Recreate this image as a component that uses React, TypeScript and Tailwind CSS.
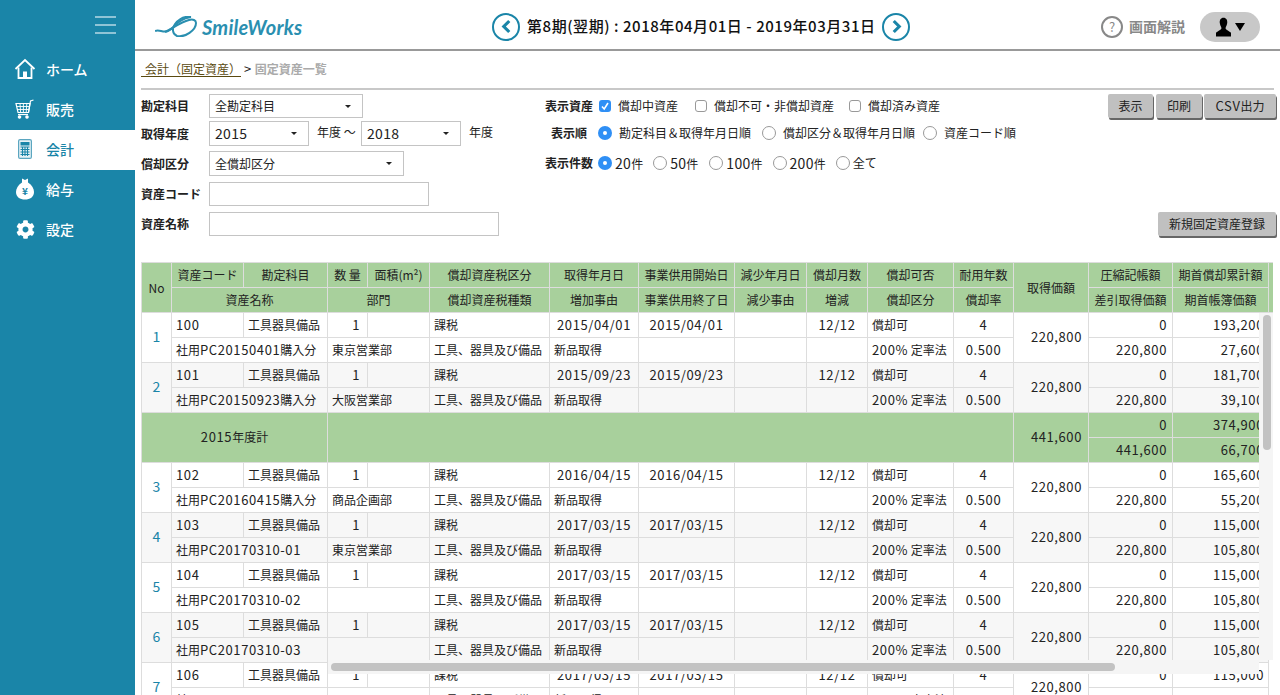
import { FaCog } from 'react-icons/fa';

const FONT = "font-['Noto_Sans_CJK_JP','Noto_Sans',sans-serif]";

type Asset = {
  no: number;
  code: string;
  name: string;
  dept: string;
  acquired: string;
  start: string;
  comp: string;
  cum: string;
  net: string;
  book: string;
};

const assets: Asset[] = [
  { no: 1, code: '100', name: '社用PC20150401購入分', dept: '東京営業部', acquired: '2015/04/01', start: '2015/04/01', comp: '0', cum: '193,200', net: '220,800', book: '27,600' },
  { no: 2, code: '101', name: '社用PC20150923購入分', dept: '大阪営業部', acquired: '2015/09/23', start: '2015/09/23', comp: '0', cum: '181,700', net: '220,800', book: '39,100' },
  { no: 3, code: '102', name: '社用PC20160415購入分', dept: '商品企画部', acquired: '2016/04/15', start: '2016/04/15', comp: '0', cum: '165,600', net: '220,800', book: '55,200' },
  { no: 4, code: '103', name: '社用PC20170310-01', dept: '東京営業部', acquired: '2017/03/15', start: '2017/03/15', comp: '0', cum: '115,000', net: '220,800', book: '105,800' },
  { no: 5, code: '104', name: '社用PC20170310-02', dept: '', acquired: '2017/03/15', start: '2017/03/15', comp: '0', cum: '115,000', net: '220,800', book: '105,800' },
  { no: 6, code: '105', name: '社用PC20170310-03', dept: '', acquired: '2017/03/15', start: '2017/03/15', comp: '0', cum: '115,000', net: '220,800', book: '105,800' },
  { no: 7, code: '106', name: '社用PC20170310-04', dept: '', acquired: '2017/03/15', start: '2017/03/15', comp: '0', cum: '115,000', net: '220,800', book: '105,800' },
];

const colWidths = [30, 72, 84, 40, 62, 120, 89, 96, 72, 61, 86, 60, 75, 84, 96, 5];

// latin runs are a little wider than the CJK font gives at 12px
function T({ text }: { text: string }) {
  return (
    <>
      {text.split(/([\x21-\x7e]+)/).map((part, i) =>
        /[\x21-\x7e]/.test(part) ? (
          <span key={i} className="text-[13px] tracking-[0.6px]">
            {part}
          </span>
        ) : (
          part
        ),
      )}
    </>
  );
}

const th = 'border border-[#ddd] bg-[#a8d09c] h-[25px] p-0 font-normal text-center text-[12px] text-[#222]';
const td = 'border border-[#ddd] h-[25px] p-0 px-[4px] text-[12px] text-[#222] whitespace-nowrap overflow-hidden';
const num = td + ' text-right pr-[5px]';
const price = td + ' text-right pr-[6px] pb-[2px]';

function AssetRows({ a }: { a: Asset }) {
  const bg = a.no % 2 === 0 ? 'bg-[#f7f7f7]' : 'bg-white';
  return (
    <>
      <tr className={bg}>
        <td rowSpan={2} className="border border-[#ddd] p-0 pb-[2px] text-center text-[14px] text-[#1a85a8]">
          {a.no}
        </td>
        <td className={td}><T text={a.code} /></td>
        <td className={td}>工具器具備品</td>
        <td className={td + ' text-right pr-[7px]'}><T text="1" /></td>
        <td className={td}></td>
        <td className={td}>課税</td>
        <td className={td + ' text-center'}><T text={a.acquired} /></td>
        <td className={td + ' text-center'}><T text={a.start} /></td>
        <td className={td}></td>
        <td className={td + ' text-center'}><T text="12/12" /></td>
        <td className={td}>償却可</td>
        <td className={td + ' text-center'}><T text="4" /></td>
        <td rowSpan={2} className={price}><T text="220,800" /></td>
        <td className={num}><T text={a.comp} /></td>
        <td className={td + ' text-right'}><T text={a.cum} /></td>
      </tr>
      <tr className={bg}>
        <td colSpan={2} className={td}><T text={a.name} /></td>
        <td colSpan={2} className={td}>{a.dept}</td>
        <td className={td}>工具、器具及び備品</td>
        <td className={td}>新品取得</td>
        <td className={td}></td>
        <td className={td}></td>
        <td className={td}></td>
        <td className={td}><T text="200%" /> 定率法</td>
        <td className={td + ' text-center'}><T text="0.500" /></td>
        <td className={num}><T text={a.net} /></td>
        <td className={td + ' text-right'}><T text={a.book} /></td>
      </tr>
    </>
  );
}

function TotalRows() {
  const g = td + ' bg-[#a8d09c]';
  const n = num + ' bg-[#a8d09c]';
  return (
    <>
      <tr>
        <td colSpan={3} rowSpan={2} className={g + ' text-center pb-[2px]'}><T text="2015" />年度計</td>
        <td colSpan={9} rowSpan={2} className={g}></td>
        <td rowSpan={2} className={price + ' bg-[#a8d09c]'}><T text="441,600" /></td>
        <td className={n}><T text="0" /></td>
        <td className={g + ' text-right'}><T text="374,900" /></td>
      </tr>
      <tr>
        <td className={n}><T text="441,600" /></td>
        <td className={g + ' text-right'}><T text="66,700" /></td>
      </tr>
    </>
  );
}

function AssetTable() {
  return (
    <div className="relative ml-[6px] mt-[26px] w-[1132px] flex-1 min-h-0 overflow-hidden">
      <table className="table-fixed border-collapse w-[1132px]">
        <colgroup>
          {colWidths.map((w, i) => (
            <col key={i} style={{ width: w }} />
          ))}
        </colgroup>
        <thead>
          <tr>
            <th rowSpan={2} className={th}>No</th>
            <th className={th}>資産コード</th>
            <th className={th}>勘定科目</th>
            <th className={th}>数 量</th>
            <th className={th}>面積(m²)</th>
            <th className={th}>償却資産税区分</th>
            <th className={th}>取得年月日</th>
            <th className={th}>事業供用開始日</th>
            <th className={th}>減少年月日</th>
            <th className={th}>償却月数</th>
            <th className={th}>償却可否</th>
            <th className={th}>耐用年数</th>
            <th rowSpan={2} className={th}>取得価額</th>
            <th className={th}>圧縮記帳額</th>
            <th className={th}>期首償却累計額</th>
            <th rowSpan={2} className={th}></th>
          </tr>
          <tr>
            <th colSpan={2} className={th}>資産名称</th>
            <th colSpan={2} className={th}>部門</th>
            <th className={th}>償却資産税種類</th>
            <th className={th}>増加事由</th>
            <th className={th}>事業供用終了日</th>
            <th className={th}>減少事由</th>
            <th className={th}>増減</th>
            <th className={th}>償却区分</th>
            <th className={th}>償却率</th>
            <th className={th}>差引取得価額</th>
            <th className={th}>期首帳簿価額</th>
          </tr>
        </thead>
        <tbody>
          <AssetRows a={assets[0]} />
          <AssetRows a={assets[1]} />
          <TotalRows />
          {assets.slice(2).map((a) => (
            <AssetRows key={a.no} a={a} />
          ))}
        </tbody>
      </table>
      {/* overlay scrollbars */}
      <div className="absolute left-[1118px] top-[51px] w-[14px] h-[347px] bg-[#f5f5f5]">
        <div className="ml-[4px] mt-[2px] w-[8px] h-[135px] rounded bg-[#c2c2c2]" />
      </div>
      <div className="absolute left-[187px] top-[398px] w-[931px] h-[14px] bg-[#f5f5f5] pt-[3px]">
        <div className="ml-[3px] w-[784px] h-[8px] rounded bg-[#c2c2c2]" />
      </div>
    </div>
  );
}

function Check({ on }: { on?: boolean }) {
  return (
    <span
      className={
        'inline-flex w-[12px] h-[12px] rounded-[3px] items-center justify-center ' +
        (on ? 'bg-[#2f8ff5]' : 'bg-white border border-[#999]')
      }
    >
      {on && (
        <svg viewBox="0 0 12 12" className="w-[12px] h-[12px]">
          <path d="M3 6.5 L5.2 9 L9 3" fill="none" stroke="#fff" strokeWidth="1.6" />
        </svg>
      )}
    </span>
  );
}

function Radio({ on }: { on?: boolean }) {
  return (
    <span
      className={
        'inline-flex w-[14px] h-[14px] rounded-full items-center justify-center ' +
        (on ? 'bg-[#2f8ff5]' : 'bg-white border border-[#999]')
      }
    >
      {on && <span className="w-[4px] h-[4px] rounded-full bg-white" />}
    </span>
  );
}

function Select({ label, width, big }: { label: string; width: string; big?: boolean }) {
  return (
    <div className={'flex items-center justify-between border border-[#c4c4c4] bg-white h-full pl-[5px] pr-[11px] text-[#222] shrink-0 ' + (big ? 'text-[14px] tracking-[0.3px] ' : 'text-[12px] ') + width}>
      <span>{label}</span>
      <span className="w-0 h-0 border-x-[3px] border-x-transparent border-t-[3px] border-t-[#222]" />
    </div>
  );
}

function Btn({ label, className }: { label: string; className: string }) {
  return (
    <button className={'h-[24px] bg-[#c0c0c0] rounded-[2px] text-[12px] text-[#222] shadow-[1px_2px_0_#666] ' + className}>
      <T text={label} />
    </button>
  );
}

function FormLeft() {
  const label = 'w-[68px] shrink-0 text-[12px] font-bold text-[#222]';
  return (
    <div className="w-[404px] shrink-0 flex flex-col">
      <div className="flex items-center h-[24px]">
        <span className={label}>勘定科目</span>
        <Select label="全勘定科目" width="w-[154px]" />
      </div>
      <div className="flex items-center h-[25px] mt-[3px]">
        <span className={label}>取得年度</span>
        <Select label="2015" width="w-[100px]" big />
        <span className="w-[52px] shrink-0 pl-[8px] text-[12px] text-[#222] -mt-[3px]">年度 〜</span>
        <Select label="2018" width="w-[100px]" big />
        <span className="pl-[8px] text-[12px] text-[#222] -mt-[3px] shrink-0">年度</span>
      </div>
      <div className="flex items-center h-[25px] mt-[5px]">
        <span className={label}>償却区分</span>
        <Select label="全償却区分" width="w-[195px]" />
      </div>
      <div className="flex items-center h-[24px] mt-[6px]">
        <span className={label}>資産コード</span>
        <div className="w-[220px] h-full border border-[#c4c4c4] bg-white shrink-0" />
      </div>
      <div className="flex items-center h-[24px] mt-[6px]">
        <span className={label}>資産名称</span>
        <div className="w-[290px] h-full border border-[#c4c4c4] bg-white shrink-0" />
      </div>
    </div>
  );
}

function FormRight() {
  const text = 'text-[12px] text-[#222]';
  const label = 'text-[12px] font-bold text-[#222]';
  const digits = 'text-[14px] tracking-[0.3px]';
  return (
    <div className="flex flex-col pt-[2px]">
      <div className="flex items-center h-[20px]">
        <span className={label + ' w-[54px]'}>表示資産</span>
        <Check on />
        <span className={text + ' ml-[7px]'}>償却中資産</span>
        <span className="ml-[17px] flex"><Check /></span>
        <span className={text + ' ml-[7px]'}>償却不可・非償却資産</span>
        <span className="ml-[15px] flex"><Check /></span>
        <span className={text + ' ml-[7px]'}>償却済み資産</span>
      </div>
      <div className="flex items-center h-[20px] mt-[7px]">
        <span className={label + ' w-[53px] pl-[6px]'}>表示順</span>
        <Radio on />
        <span className={text + ' ml-[7px]'}>勘定科目＆取得年月日順</span>
        <span className="ml-[11px] flex"><Radio /></span>
        <span className={text + ' ml-[7px]'}>償却区分＆取得年月日順</span>
        <span className="ml-[8px] flex"><Radio /></span>
        <span className={text + ' ml-[7px]'}>資産コード順</span>
      </div>
      <div className="flex items-center h-[20px] mt-[10px]">
        <span className={label + ' w-[53px]'}>表示件数</span>
        <Radio on />
        <span className={text + ' ml-[3px]'}><span className={digits}>20</span>件</span>
        <span className="ml-[10px] flex"><Radio /></span>
        <span className={text + ' ml-[3px]'}><span className={digits}>50</span>件</span>
        <span className="ml-[11px] flex"><Radio /></span>
        <span className={text + ' ml-[3px]'}><span className={digits}>100</span>件</span>
        <span className="ml-[10px] flex"><Radio /></span>
        <span className={text + ' ml-[3px]'}><span className={digits}>200</span>件</span>
        <span className="ml-[10px] flex"><Radio /></span>
        <span className={text + ' ml-[3px]'}>全て</span>
      </div>
    </div>
  );
}

function Circle({ dir }: { dir: 'l' | 'r' }) {
  return (
    <span className="w-[28px] h-[28px] rounded-full border-[2.5px] border-[#1a85a8] flex items-center justify-center shrink-0">
      <svg viewBox="0 0 12 16" className="w-[11px] h-[15px]">
        <path d={dir === 'l' ? 'M9 2 L3 8 L9 14' : 'M3 2 L9 8 L3 14'} fill="none" stroke="#1a85a8" strokeWidth="3.4" />
      </svg>
    </span>
  );
}

function Logo() {
  return (
    <div className="flex items-center ml-[20px] w-[148px] shrink-0">
      <svg viewBox="0 0 42 21" className="w-[42px] h-[21px] shrink-0">
        <path d="M0 15 C4 13 8 17 13 15 C20 12 22 3 36 1" fill="none" stroke="#2a8fb0" strokeWidth="2" />
        <path d="M36 1 C30 0 24 3 20 8 C17 12 17 18 22 20 C30 22 41 14 41 7 C41 4 38 3 34 4 C26 6 18 12 10 16" fill="none" stroke="#2a8fb0" strokeWidth="2" />
      </svg>
      <span className="ml-[5px] font-['Lato',sans-serif] italic font-bold text-[20px] leading-none tracking-[0.2px] text-[#2a8fb0]">SmileWorks</span>
    </div>
  );
}

function Header() {
  return (
    <header className="h-[51px] shrink-0 border-b-[2px] border-[#999] bg-white flex items-center pt-[4px]">
      <Logo />
      <div className="ml-[189px] flex items-center gap-[6px]">
        <Circle dir="l" />
        <span className="text-[15px] tracking-[0.55px] text-[#111] whitespace-nowrap w-[350px] pl-[1px] font-medium">
          第8期(翌期) : 2018年04月01日 - 2019年03月31日
        </span>
        <Circle dir="r" />
      </div>
      <span className="ml-[191px] w-[22px] h-[22px] rounded-full border-2 border-[#888] text-[#888] text-[13px] flex items-center justify-center shrink-0">?</span>
      <span className="ml-[6px] text-[14px] font-bold text-[#888] whitespace-nowrap">画面解説</span>
      <span className="ml-[15px] w-[60px] h-[30px] rounded-full bg-[#c8c8c8] flex items-center justify-center gap-[4px] shrink-0">
        <svg viewBox="0 0 16 20" className="w-[15px] h-[20px]">
          <path d="M8 0 C11 0 12.3 2.5 12 5.5 C11.8 8 10.6 9.5 10.2 11 C10.2 13 13.5 14 16 16 V20 H0 V16 C2.5 14 5.8 13 5.8 11 C5.4 9.5 4.2 8 4 5.5 C3.7 2.5 5 0 8 0 Z" fill="#000" />
        </svg>
        <span className="w-0 h-0 border-x-[5px] border-x-transparent border-t-[8px] border-t-black" />
      </span>
    </header>
  );
}

const navIcons: Record<string, React.ReactNode> = {
  home: (
    <svg viewBox="0 0 22 22" className="w-[22px] h-[22px]" fill="none" stroke="#fff" strokeWidth="1.8">
      <path d="M1.5 11 L11 2 L20.5 11" />
      <path d="M4.5 9.5 V20 H17.5 V9.5" />
      <rect x="9" y="13.5" width="4" height="6.5" fill="#fff" stroke="none" />
    </svg>
  ),
  cart: (
    <svg viewBox="0 0 20 20" className="w-[20px] h-[20px]" fill="none" stroke="#fff" strokeWidth="1.2">
      <path d="M1 4.5 H15 L13.5 13.5 H3 Z" />
      <path d="M1.6 7.5 H14.5 M2.2 10.5 H14 M5 4.5 L5.6 13.5 M8.4 4.5 V13.5 M11.8 4.5 L11.2 13.5" strokeWidth="0.9" />
      <path d="M13.5 13.5 L15.5 2 L18.5 1" />
      <path d="M3 15.5 H13" />
      <circle cx="4.5" cy="18" r="1.2" fill="#fff" />
      <circle cx="12" cy="18" r="1.2" fill="#fff" />
    </svg>
  ),
  calc: (
    <svg viewBox="0 0 14 20" className="w-[14px] h-[20px]">
      <rect x="0.6" y="0.6" width="12.8" height="18.8" rx="1.5" fill="#e6f1f5" stroke="#5ba6c0" strokeWidth="1.2" />
      <rect x="2.5" y="3" width="9" height="3.5" fill="#1a85a8" />
      <path d="M2.5 8 H11.5 M2.5 10.5 H11.5 M2.5 13 H11.5 M2.5 15.5 H11.5 M4.5 7.5 V17 M7 7.5 V17 M9.5 7.5 V17" stroke="#1a85a8" strokeWidth="1.1" />
    </svg>
  ),
  bag: (
    <svg viewBox="0 0 18 22" className="w-[18px] h-[22px]">
      <path d="M6 0.5 L9 2 L12 0.5 L12 4.5 C16 7 18 10.5 18 14 C18 19 14 21.5 9 21.5 C4 21.5 0 19 0 14 C0 10.5 2 7 6 4.5 Z" fill="#fff" />
      <text x="9" y="17" textAnchor="middle" fontSize="10" fontWeight="700" fill="#1a85a8">¥</text>
    </svg>
  ),
  gear: <FaCog className="w-[19px] h-[19px] text-white" />,
};

const navItems = [
  { key: 'home', label: 'ホーム' },
  { key: 'cart', label: '販売' },
  { key: 'calc', label: '会計', active: true },
  { key: 'bag', label: '給与' },
  { key: 'gear', label: '設定' },
];

function Sidebar() {
  return (
    <aside className="w-[135px] shrink-0 bg-[#1a85a8]">
      <div className="h-[50px] flex flex-col items-end gap-[6px] pt-[16px] pr-[19px]">
        <span className="w-[21px] h-[2px] bg-[#8fc4d6]" />
        <span className="w-[21px] h-[2px] bg-[#8fc4d6]" />
        <span className="w-[21px] h-[2px] bg-[#8fc4d6]" />
      </div>
      <nav>
        {navItems.map((item) => (
          <div
            key={item.key}
            className={'flex items-center h-[40px] pb-[2px] text-[14px] font-medium ' + (item.active ? 'bg-white text-[#1a85a8]' : 'text-white')}
          >
            <span className="w-[46px] pl-[14px] pr-[10px] flex justify-center shrink-0">{navIcons[item.key]}</span>
            {item.label}
          </div>
        ))}
      </nav>
    </aside>
  );
}

export default function App() {
  return (
    <div className={'flex w-[1280px] h-[695px] overflow-hidden bg-white ' + FONT}>
      <Sidebar />
      <main className="flex-1 min-w-0 flex flex-col">
        <Header />
        <div className="mx-[6px] h-[39px] shrink-0 border-b-[2px] border-[#c8c8c8] pt-[9px] text-[12px] flex items-start">
          <span className="border-b border-[#5a4a10] pl-[4px] h-[17px] leading-[17px] text-[#5a4a10]">会計（固定資産）</span>
          <span className="ml-[3px] leading-[17px] text-[#222]"><T text=">" /></span>
          <span className="ml-[3px] leading-[17px] font-bold text-[#aaa]">固定資産一覧</span>
        </div>
        <div className="flex shrink-0 pl-[6px] pr-[4px] pt-[4px]">
          <FormLeft />
          <FormRight />
          <div className="flex-1 flex flex-col items-end justify-between">
            <div className="flex">
              <Btn label="表示" className="w-[45px]" />
              <Btn label="印刷" className="w-[46px] ml-[3px]" />
              <Btn label="CSV出力" className="w-[72px] ml-[2px]" />
            </div>
            <Btn label="新規固定資産登録" className="w-[118px]" />
          </div>
        </div>
        <AssetTable />
      </main>
    </div>
  );
}
